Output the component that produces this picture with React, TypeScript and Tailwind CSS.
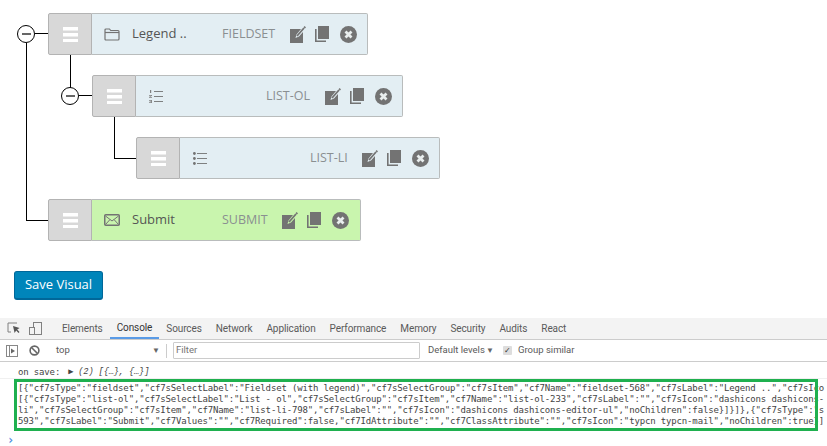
const sans = "font-['Open_Sans',sans-serif]";

function Hamburger() {
  return (
    <svg width="15" height="15" viewBox="0 0 15 15" fill="white">
      <rect x="0" y="0" width="15" height="3.5" />
      <rect x="0" y="6" width="15" height="3.5" />
      <rect x="0" y="12" width="15" height="3" />
    </svg>
  );
}

function EditIcon() {
  return (
    <svg width="16" height="17" viewBox="0 0 16 17" fill="#737373">
      <path d="M0 3h11L6.5 8.5 5.5 12l3.5-1.5L13 6v11H0z" />
      <path d="M7 10 14 2" stroke="#737373" strokeWidth="1.8" />
      <path d="M14.5 0 16 1.2 15 2.4 13.6 1.2z" />
    </svg>
  );
}

function CopyIcon() {
  return (
    <svg width="14" height="16" viewBox="0 0 14 16" fill="#737373">
      <path d="M3 0h11v13H3z" />
      <path d="M0 3h1.6v11.4H11V16H0z" />
    </svg>
  );
}

function CloseIcon() {
  return (
    <svg width="17" height="17" viewBox="0 0 17 17">
      <circle cx="8.5" cy="8.5" r="8.5" fill="#737373" />
      <path d="M5.5 5.5l6 6M11.5 5.5l-6 6" stroke="#e9eeee" strokeWidth="2.8" />
    </svg>
  );
}

function FolderIcon() {
  return (
    <svg width="16" height="13" viewBox="0 0 16 13" fill="none" stroke="#737373" strokeWidth="1.2">
      <path d="M1 11V2q0-1 1-1h3.5l1.2 1.5H14q1 0 1 1V11q0 1-1 1H2q-1 0-1-1z" />
      <path d="M1 4.5h14" />
    </svg>
  );
}

function OrderedIcon() {
  return (
    <svg width="14" height="13" viewBox="0 0 14 13">
      <path d="M5 1.5h9M5 6.5h9M5 11.5h9" stroke="#737373" strokeWidth="0.9" />
      <path d="M1 0h1.2v3H1zM0 5h3v.8L1 7h2v.8H0V7l2-1.2H0zM0 10h3v3H0v-.7h2.2v-.5H.6v-.6h1.6v-.5H0z" fill="#808080" />
    </svg>
  );
}

function BulletIcon() {
  return (
    <svg width="14" height="13" viewBox="0 0 14 13">
      <path d="M4 1.5h10M4 6.5h10M4 11.5h10" stroke="#737373" strokeWidth="0.9" />
      <circle cx="1.4" cy="1.5" r="1.4" fill="#737373" />
      <circle cx="1.4" cy="6.5" r="1.4" fill="#737373" />
      <circle cx="1.4" cy="11.5" r="1.4" fill="#737373" />
    </svg>
  );
}

function MailIcon() {
  return (
    <svg width="16" height="12" viewBox="0 0 16 12" fill="none" stroke="#737373">
      <rect x="0.75" y="0.75" width="14.5" height="10.5" rx="1" strokeWidth="1.5" />
      <path d="M1.5 2 8 7l6.5-5M1.5 10.5 6 5.5M14.5 10.5 10 5.5" strokeWidth="1" />
    </svg>
  );
}

function Toggle() {
  return (
    <span className="absolute left-[-31px] top-[12px] flex h-[18px] w-[18px] items-center justify-center rounded-full border border-black bg-white">
      <span className="block h-[2px] w-[9px] bg-[#666]" />
    </span>
  );
}

type RowProps = {
  icon: React.ReactNode;
  label?: string;
  kind: string;
  green?: boolean;
  toggle?: boolean;
  className: string;
  kindWidth: string;
};

function Row({ icon, label, kind, green, toggle, className, kindWidth }: RowProps) {
  return (
    <div className={`relative flex h-[42px] ${className}`}>
      {toggle && <Toggle />}
      <div className="flex w-[44px] shrink-0 items-center justify-center rounded-l-[2px] border border-[#b3b3b3] bg-[#d8d8d8]">
        <Hamburger />
      </div>
      <div
        className={`flex flex-1 items-center rounded-r-[2px] border border-l-0 border-[#b9bcbc] pl-[12px] ${
          green ? "bg-[#c9f5ae]" : "bg-[#e3eef3]"
        }`}
      >
        <span className="flex w-[16px] shrink-0 justify-center">{icon}</span>
        <span className="ml-[12px] w-[90px] text-[13px] text-[#555]">{label}</span>
        <span className={`text-[12.5px] text-[#8a8f91] ${kindWidth}`}>{kind}</span>
        <span className="ml-[13px] flex items-center">
          <EditIcon />
          <span className="ml-[9px]">
            <CopyIcon />
          </span>
          <span className="ml-[11px]">
            <CloseIcon />
          </span>
        </span>
      </div>
    </div>
  );
}

function Tree() {
  return (
    <div className="relative flex flex-col gap-[20px] pt-[13px]">
      {/* connector lines */}
      <div className="absolute left-[35px] top-[33px] h-px w-[13px] bg-black" />
      <div className="absolute left-[26px] top-[43px] h-[177px] w-px bg-black" />
      <div className="absolute left-[26px] top-[220px] h-px w-[22px] bg-black" />
      <div className="absolute left-[70px] top-[55px] h-[33px] w-px bg-black" />
      <div className="absolute left-[79px] top-[95px] h-px w-[13px] bg-black" />
      <div className="absolute left-[114px] top-[117px] h-[41px] w-px bg-black" />
      <div className="absolute left-[114px] top-[158px] h-px w-[22px] bg-black" />

      <Row toggle className="ml-[48px] w-[320px]" icon={<FolderIcon />} label="Legend .." kind="FIELDSET" kindWidth="w-[55px]" />
      <Row toggle className="ml-[92px] w-[311px]" icon={<OrderedIcon />} kind="LIST-OL" kindWidth="w-[46px]" />
      <Row className="ml-[136px] w-[304px]" icon={<BulletIcon />} kind="LIST-LI" kindWidth="w-[39px]" />
      <Row className="ml-[48px] w-[313px]" icon={<MailIcon />} label="Submit" kind="SUBMIT" green kindWidth="w-[47px]" />
    </div>
  );
}

function DevTabs() {
  const tabs = ["Elements", "Console", "Sources", "Network", "Application", "Performance", "Memory", "Security", "Audits", "React"];
  return (
    <div className="flex h-[22px] items-stretch border-b border-[#ccc] bg-[#f3f3f3] font-['Roboto',sans-serif] text-[10px] tracking-[-0.1px] text-[#5a5a5a]">
      <div className="flex w-[55px] items-center gap-[8px] pl-[7px]">
        <svg width="14" height="13" viewBox="0 0 14 13" fill="none">
          <path d="M10 1H1v9h3" stroke="#808080" />
          <path d="M6 4l1.6 7 1.6-2.4 2.3 2.3 1-1-2.3-2.3L12.6 6z" fill="#555" />
        </svg>
        <svg width="13" height="13" viewBox="0 0 13 13" fill="none" stroke="#808080">
          <rect x="4.5" y="0.5" width="8" height="12" />
          <rect x="0.5" y="5.5" width="5" height="7" fill="#f3f3f3" />
        </svg>
      </div>
      <div className="flex">
        {tabs.map((t) => (
          <span
            key={t}
            className={`flex items-center px-[7px] ${t === "Console" ? "border-b-2 border-[#5a9be6] text-[#333]" : ""}`}
          >
            {t}
          </span>
        ))}
      </div>
    </div>
  );
}

function DevToolbar() {
  return (
    <div className="flex h-[22px] items-center whitespace-nowrap border-b border-[#ccc] bg-white font-['Roboto',sans-serif] text-[9.5px] text-[#5a5a5a]">
      <svg className="ml-[6px]" width="12" height="12" viewBox="0 0 12 12" fill="none">
        <rect x="0.5" y="0.5" width="11" height="11" stroke="#888" />
        <path d="M3.5 1v10" stroke="#888" />
        <path d="M5 3.5 9 6l-4 2.5z" fill="#666" />
      </svg>
      <svg className="ml-[11px]" width="11" height="11" viewBox="0 0 11 11" fill="none" stroke="#666" strokeWidth="1.6">
        <circle cx="5.5" cy="5.5" r="4.4" />
        <path d="M2.5 2.5l6 6" />
      </svg>
      <span className="ml-[16px] w-[96px]">top</span>
      <span className="w-[8px] text-[8px] text-[#666]">▼</span>
      <span className="ml-[6px] h-[14px] w-px bg-[#ccc]" />
      <span className="ml-[6px] flex h-[17px] w-[247px] items-center rounded-[1px] border border-[#ccc] pl-[2px] text-[#757575]">Filter</span>
      <span className="ml-[8px] w-[58px]">Default levels</span>
      <span className="w-[8px] text-[8px] text-[#666]">▼</span>
      <span className="ml-[9px] flex h-[9px] w-[9px] items-center justify-center rounded-[1px] bg-[#ddd] text-[8px] leading-none text-[#333]">✓</span>
      <span className="ml-[6px]">Group similar</span>
    </div>
  );
}

const logLines = [
  '[{"cf7sType":"fieldset","cf7sSelectLabel":"Fieldset (with legend)","cf7sSelectGroup":"cf7sItem","cf7Name":"fieldset-568","cf7sLabel":"Legend ..","cf7sIco',
  '[{"cf7sType":"list-ol","cf7sSelectLabel":"List - ol","cf7sSelectGroup":"cf7sItem","cf7Name":"list-ol-233","cf7sLabel":"","cf7sIcon":"dashicons dashicons-',
  'li","cf7sSelectGroup":"cf7sItem","cf7Name":"list-li-798","cf7sLabel":"","cf7sIcon":"dashicons dashicons-editor-ul","noChildren":false}]}]},{"cf7sType":"s',
  '593","cf7sLabel":"Submit","cf7Values":"","cf7Required":false,"cf7IdAttribute":"","cf7ClassAttribute":"","cf7sIcon":"typcn typcn-mail","noChildren":true}]',
];

function DevConsole() {
  return (
    <div className="relative font-['DejaVu_Sans_Mono',monospace] text-[9px] leading-[11px] tracking-[-0.15px] text-[#444]">
      <div className="flex h-[17px] items-center border-b border-[#f0f0f0] pl-[18px] pt-[5px]">
        on save: <span className="ml-[8px] font-['Liberation_Mono',monospace] text-[8.7px] italic">▶ (2) [{"{…}"}, {"{…}"}]</span>
      </div>
      <div className="whitespace-pre pl-[18px] pt-[4px]">
        {logLines.map((l) => (
          <div key={l}>{l}</div>
        ))}
      </div>
      <div className="mt-[8px] pl-[7px] text-[12px] font-bold leading-[10px] text-[#4a8be0]">›</div>
      {/* highlight drawn on top of the console output */}
      <div className="absolute left-[14px] top-[17px] h-[52px] w-[804px] border-[3px] border-[#1fb04f]" />
    </div>
  );
}

export default function App() {
  return (
    <div className={`h-[446px] w-[827px] overflow-hidden bg-white ${sans}`}>
      <Tree />
      <button className="ml-[14px] mt-[30px] block h-[29px] w-[89px] rounded-[3px] border border-[#006799] border-b-[2px] bg-[#0085ba] text-[13px] text-white">
        Save Visual
      </button>
      <div className="mt-[18px]">
        <DevTabs />
        <DevToolbar />
        <DevConsole />
      </div>
    </div>
  );
}
